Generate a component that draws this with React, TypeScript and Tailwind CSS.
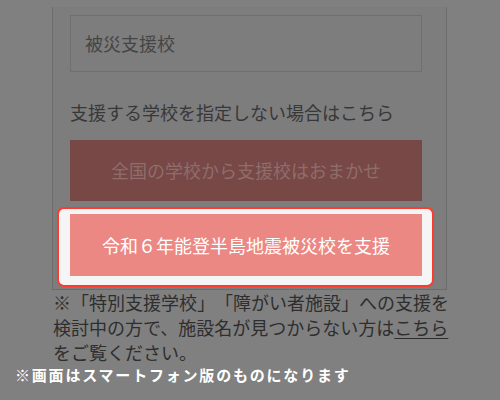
import React from 'react';

const jp = { fontFamily: '"Noto Sans CJK JP", "Noto Sans", sans-serif' };

const App = () => {
  return (
    <div
      className="w-[500px] h-[400px] bg-[#808080] overflow-hidden [text-spacing-trim:space-all]"
      style={jp}
    >
      {/* phone panel */}
      <div className="ml-[52px] mt-[7px] w-[395px] border-x border-b border-[#6d6d6d] bg-[#7d7d7d] pt-[8px] pb-[2px]">
        <div className="ml-[17px] w-[352px] h-[57px] border border-[#6f6f6f] flex items-center pl-[14px] text-[18px] text-[#454545]">
          被災支援校
        </div>
        <p className="ml-[17px] mt-[28px] text-[18px] leading-[24px] text-[#383838]">
          支援する学校を指定しない場合はこちら
        </p>
        <div className="ml-[17px] mt-[16px] w-[352px] h-[61px] bg-[#774846] flex items-center justify-center text-[18px] text-[#8f6d6b]">
          全国の学校から支援校はおまかせ
        </div>
        <div className="ml-[4px] mt-[6px] w-[377px] h-[80px] rounded-[7px] border-2 border-[#ff3b2f] bg-[#f5f5f5] pl-[11px] pt-[5px]">
          <div className="w-[352px] h-[62px] bg-[#eb8884] flex items-center justify-center text-[18px] text-white">
            令和６年能登半島地震被災校を支援
          </div>
        </div>
      </div>

      <p className="ml-[53px] w-[410px] text-[18px] leading-[25px] text-[#2e2e2e]">
        ※「特別支援学校」「障がい者施設」への支援を
        <br />
        検討中の方で、施設名が見つからない方は
        <span className="underline underline-offset-[3px]">こちら</span>
        <br />
        をご覧ください。
      </p>

      <p className="ml-[15px] text-[15px] leading-[20px] font-bold tracking-[1.8px] text-white">
        ※画面はスマートフォン版のものになります
      </p>
    </div>
  );
};

export default App;
